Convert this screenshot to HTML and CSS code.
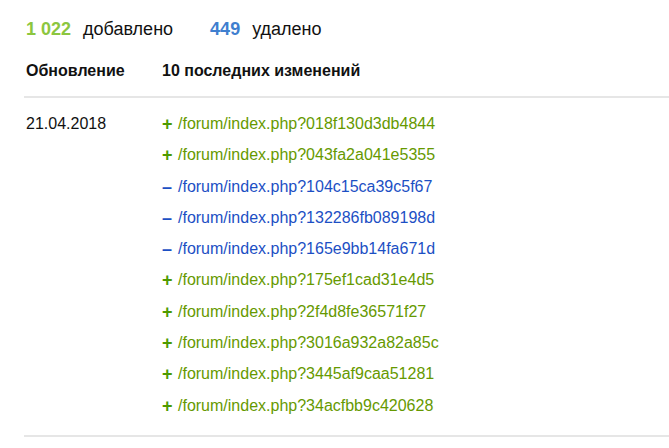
FILE: index.html
```html
<!DOCTYPE html>
<html lang="ru">
<head>
    <meta charset="UTF-8">
    <title>Изменения</title>
    <link rel="stylesheet" href="styles.css">
</head>
<body>
    <div class="summary">
        <span class="num added">1 022</span><span class="label">добавлено</span>
        <span class="num removed">449</span><span class="label">удалено</span>
    </div>

    <div class="table">
        <div class="thead">
            <div class="col-date">Обновление</div>
            <div class="col-list">10 последних изменений</div>
        </div>
        <div class="row">
            <div class="col-date">21.04.2018</div>
            <ul class="col-list changes">
                <li class="plus"><span class="sign">+</span>/forum/index.php?018f130d3db4844</li>
                <li class="plus"><span class="sign">+</span>/forum/index.php?043fa2a041e5355</li>
                <li class="minus"><span class="sign">&ndash;</span>/forum/index.php?104c15ca39c5f67</li>
                <li class="minus"><span class="sign">&ndash;</span>/forum/index.php?132286fb089198d</li>
                <li class="minus"><span class="sign">&ndash;</span>/forum/index.php?165e9bb14fa671d</li>
                <li class="plus"><span class="sign">+</span>/forum/index.php?175ef1cad31e4d5</li>
                <li class="plus"><span class="sign">+</span>/forum/index.php?2f4d8fe36571f27</li>
                <li class="plus"><span class="sign">+</span>/forum/index.php?3016a932a82a85c</li>
                <li class="plus"><span class="sign">+</span>/forum/index.php?3445af9caa51281</li>
                <li class="plus"><span class="sign">+</span>/forum/index.php?34acfbb9c420628</li>
            </ul>
        </div>
    </div>
</body>
</html>
```

FILE: styles.css
```css
body {
    font-family: "Liberation Sans", Arial, sans-serif;
    margin: 0;
    padding: 0;
    background-color: #fff;
    color: #111;
}

.summary {
    padding: 18px 0 0 26px;
    font-size: 18px;
    line-height: 22px;
}

.num {
    font-weight: bold;
    margin-right: 12px;
}

.added {
    color: #8cc63f;
}

.removed {
    color: #3f7fcf;
}

.label {
    margin-right: 32px;
}

.table {
    margin: 21px 0 0 24px;
}

.thead {
    display: flex;
    font-weight: bold;
    font-size: 16px;
    line-height: 20px;
    padding: 0 0 15px 2px;
    border-bottom: 2px solid #e6e6e6;
}

.col-date {
    width: 136px;
}

.row {
    display: flex;
    font-size: 16px;
    padding: 16px 0 8px 2px;
    border-bottom: 2px solid #e6e6e6;
}

.row .col-date {
    line-height: 20px;
}

.changes {
    list-style: none;
    margin: 0;
    padding: 0;
}

.changes li {
    line-height: 20px;
    margin-bottom: 11.3px;
}

.sign {
    display: inline-block;
    width: 16px;
    font-size: 18px;
    font-weight: bold;
    vertical-align: top;
}

.plus {
    color: #669900;
}

.plus .sign {
    color: #4d9a00;
}

.minus {
    color: #1c4fc4;
}
```
